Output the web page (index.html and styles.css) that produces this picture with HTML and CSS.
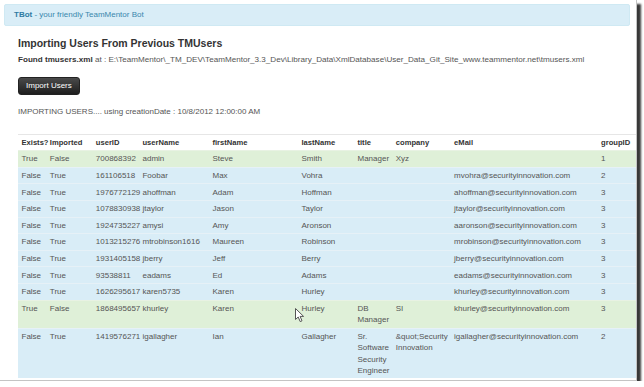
FILE: index.html
```html
<!DOCTYPE html>
<html lang="en">

<head>
    <meta charset="UTF-8">
    <meta name="viewport" content="width=device-width, initial-scale=1.0">
    <title>TBot - Import Users</title>
    <link rel="stylesheet" href="styles.css">
</head>

<body>
    <div class="shot">
        <div class="alert"><b>TBot</b> - your friendly TeamMentor Bot</div>
        <div class="content">
            <h4 class="title">Importing Users From Previous TMUsers</h4>
            <p class="found"><b>Found tmusers.xml</b> at : E:\TeamMentor\_TM_DEV\TeamMentor_3.3_Dev\Library_Data\XmlDatabase\User_Data_Git_Site_www.teammentor.net\tmusers.xml</p>
            <button class="btn">Import Users</button>
            <p class="status">IMPORTING USERS.... using creationDate : 10/8/2012 12:00:00 AM</p>
            <table class="users">
                <colgroup>
                    <col class="c-exists">
                    <col class="c-imported">
                    <col class="c-id">
                    <col class="c-user">
                    <col class="c-first">
                    <col class="c-last">
                    <col class="c-title">
                    <col class="c-company">
                    <col class="c-mail">
                    <col>
                </colgroup>
                <thead>
                    <tr>
                        <th>Exists?</th>
                        <th>Imported</th>
                        <th>userID</th>
                        <th>userName</th>
                        <th>firstName</th>
                        <th>lastName</th>
                        <th>title</th>
                        <th>company</th>
                        <th>eMail</th>
                        <th>groupID</th>
                    </tr>
                </thead>
                <tbody>
                    <tr class="ok">
                        <td>True</td><td>False</td><td>700868392</td><td>admin</td><td>Steve</td><td>Smith</td><td>Manager</td><td>Xyz</td><td></td><td>1</td>
                    </tr>
                    <tr class="info">
                        <td>False</td><td>True</td><td>161106518</td><td>Foobar</td><td>Max</td><td>Vohra</td><td></td><td></td><td>mvohra@securityinnovation.com</td><td>2</td>
                    </tr>
                    <tr class="info">
                        <td>False</td><td>True</td><td>1976772129</td><td>ahoffman</td><td>Adam</td><td>Hoffman</td><td></td><td></td><td>ahoffman@securityinnovation.com</td><td>3</td>
                    </tr>
                    <tr class="info">
                        <td>False</td><td>True</td><td>1078830938</td><td>jtaylor</td><td>Jason</td><td>Taylor</td><td></td><td></td><td>jtaylor@securityinnovation.com</td><td>3</td>
                    </tr>
                    <tr class="info">
                        <td>False</td><td>True</td><td>1924735227</td><td>amysi</td><td>Amy</td><td>Aronson</td><td></td><td></td><td>aaronson@securityinnovation.com</td><td>3</td>
                    </tr>
                    <tr class="info">
                        <td>False</td><td>True</td><td>1013215276</td><td>mtrobinson1616</td><td>Maureen</td><td>Robinson</td><td></td><td></td><td>mrobinson@securityinnovation.com</td><td>3</td>
                    </tr>
                    <tr class="info">
                        <td>False</td><td>True</td><td>1931405158</td><td>jberry</td><td>Jeff</td><td>Berry</td><td></td><td></td><td>jberry@securityinnovation.com</td><td>3</td>
                    </tr>
                    <tr class="info">
                        <td>False</td><td>True</td><td>93538811</td><td>eadams</td><td>Ed</td><td>Adams</td><td></td><td></td><td>eadams@securityinnovation.com</td><td>3</td>
                    </tr>
                    <tr class="info">
                        <td>False</td><td>True</td><td>1626295617</td><td>karen5735</td><td>Karen</td><td>Hurley</td><td></td><td></td><td>khurley@securityinnovation.com</td><td>3</td>
                    </tr>
                    <tr class="ok">
                        <td>True</td><td>False</td><td>1868495657</td><td>khurley</td><td>Karen</td><td>Hurley</td><td>DB Manager</td><td>SI</td><td>khurley@securityinnovation.com</td><td>3</td>
                    </tr>
                    <tr class="info">
                        <td>False</td><td>True</td><td>1419576271</td><td>igallagher</td><td>Ian</td><td>Gallagher</td><td>Sr. Software Security Engineer</td><td>&amp;quot;Security Innovation</td><td>igallagher@securityinnovation.com</td><td>2</td>
                    </tr>
                </tbody>
            </table>
        </div>
        <!-- mouse pointer left in the capture -->
        <svg class="cursor" width="10" height="15" viewBox="0 0 10 15">
            <path d="M0.5 0.5 L0.5 11.5 L3.2 9 L5.2 13.6 L7 12.8 L5.1 8.4 L8.6 8.4 Z" fill="#fff" stroke="#555" stroke-width="1" stroke-linejoin="round" />
        </svg>
    </div>
</body>

</html>
```

FILE: styles.css
```css
* {
    box-sizing: border-box;
}

body {
    margin: 0;
    background-color: #fff;
    font-family: "Liberation Sans", Arial, sans-serif;
}

.shot {
    position: relative;
    width: 637px;
    height: 381px;
    overflow: hidden;
    background-color: #fff;
    border-right: 1px solid #c4c4c4;
    border-bottom: 1px solid #c4c4c4;
    box-shadow: 4px 4px 2px #383838;
}

.alert {
    margin: 4px 6px 0 4px;
    height: 22px;
    padding: 0 9px;
    line-height: 20px;
    font-size: 8px;
    color: #3a87ad;
    background-color: #d9edf7;
    border: 1px solid #cfe9f3;
    border-radius: 2px;
}

.alert b {
    color: #2f7aa2;
}

.content {
    padding-left: 18px;
}

.title {
    margin: 11px 0 0;
    font-size: 10.5px;
    line-height: 12px;
    color: #333;
}

.found,
.status {
    margin: 5.3px 0 0;
    font-size: 8px;
    line-height: 11.4px;
    color: #555;
}

.found {
    font-size: 8.1px;
}

.found b {
    color: #333;
}

.status {
    margin-top: 11.3px;
}

.btn {
    display: block;
    margin-top: 11.3px;
    height: 18px;
    padding: 0 7px;
    font-family: "Liberation Sans", Arial, sans-serif;
    font-size: 8px;
    line-height: 16px;
    color: #fff;
    background: linear-gradient(#4a4a4a, #1e1e1e);
    border: 1px solid #222;
    border-radius: 3px;
}

.users {
    margin-top: 16px;
    width: 618px;
    table-layout: fixed;
    border-collapse: collapse;
    font-size: 8px;
    line-height: 11.4px;
    color: #555;
}

.c-exists { width: 28.3px; }
.c-imported { width: 46px; }
.c-id { width: 46.7px; }
.c-user { width: 70px; }
.c-first { width: 89px; }
.c-last { width: 56px; }
.c-title { width: 38.3px; }
.c-company { width: 58.3px; }
.c-mail { width: 147px; }

.users th,
.users td {
    padding: 2.1px 3.5px;
    text-align: left;
    vertical-align: top;
    border-top: 1px solid #e6e6e6;
}

.users th {
    font-size: 7.6px;
    color: #333;
    font-weight: bold;
}

.users tr.ok td {
    background-color: #dff0d8;
    border-top-color: #e8f2e3;
}

.users tr.info td {
    background-color: #d9edf7;
    border-top-color: #e6f1f7;
}

.cursor {
    position: absolute;
    left: 295px;
    top: 308px;
}
```
